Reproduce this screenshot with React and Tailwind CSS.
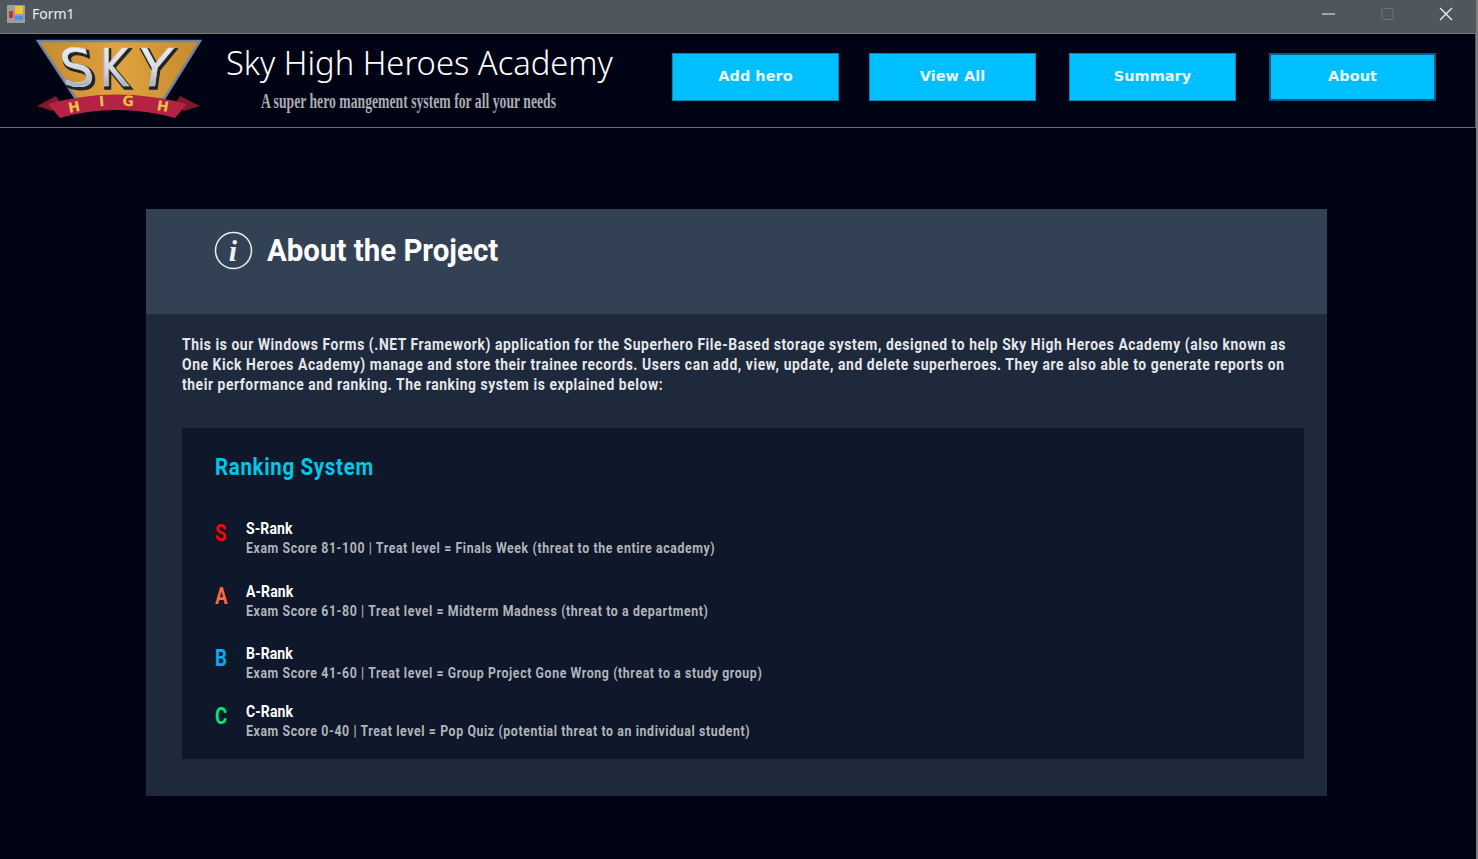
import React from 'react';

const ranks = [
    { letter: 'S', name: 'S-Rank', color: 'text-[#f00a0a]', detail: 'Exam Score 81-100 | Treat level = Finals Week (threat to the entire academy)', rowClass: 'h-[62.5px]' },
    { letter: 'A', name: 'A-Rank', color: 'text-[#fb6a3c]', detail: 'Exam Score 61-80 | Treat level = Midterm Madness (threat to a department)', rowClass: 'h-[62.5px]' },
    { letter: 'B', name: 'B-Rank', color: 'text-[#00aeef]', detail: 'Exam Score 41-60 | Treat level = Group Project Gone Wrong (threat to a study group)', rowClass: 'h-[58px]' },
    { letter: 'C', name: 'C-Rank', color: 'text-[#00e676]', detail: 'Exam Score 0-40 | Treat level = Pop Quiz (potential threat to an individual student)', rowClass: 'h-[48px]' },
];

const skyLetters = [
    { char: 'S', transform: 'translate(27 47) skewX(8) scale(1 1)' },
    { char: 'K', transform: 'translate(64 47) scale(0.82 1)' },
    { char: 'Y', transform: 'translate(100 47) skewX(-8) scale(1.02 1)' },
];

const highLetters = [
    { char: 'H', x: 39, y: 73, angle: -11 },
    { char: 'I', x: 66, y: 67, angle: -5 },
    { char: 'G', x: 92, y: 67, angle: 2 },
    { char: 'H', x: 126, y: 72, angle: 10 },
];

const Logo = () => (
    <svg width="166" height="84" viewBox="0 -4 166 84" className="-mt-[4px] shrink-0">
        <defs>
            <linearGradient id="chrome" x1="0" y1="0" x2="0" y2="1">
                <stop offset="0" stopColor="#f4f5f7" />
                <stop offset="0.55" stopColor="#d3d7dc" />
                <stop offset="1" stopColor="#8a909a" />
            </linearGradient>
            <linearGradient id="panel" x1="0" y1="0" x2="1" y2="0">
                <stop offset="0" stopColor="#c58a2e" />
                <stop offset="0.5" stopColor="#e0a23e" />
                <stop offset="1" stopColor="#c58a2e" />
            </linearGradient>
        </defs>
        <path d="M2 2 H164 L128 60 H40 Z" fill="url(#panel)" stroke="#6d85a0" strokeWidth="2.5" />
        {skyLetters.map((item) => (
            <g key={item.char} transform={item.transform}>
                <text x="1.5" y="1.5" fontFamily="DejaVu Sans" fontSize="52" fill="#23252c" stroke="#23252c" strokeWidth="3.5">{item.char}</text>
                <text fontFamily="DejaVu Sans" fontSize="52" fill="url(#chrome)" stroke="#d9dde2" strokeWidth="0.6">{item.char}</text>
            </g>
        ))}
        <path d="M1 67 L20 57 L26 66 L16 72 Z M164 67 L144 57 L138 66 L148 72 Z" fill="#7e1a2c" />
        <path d="M12 65 Q80 46 151 65 L139 79 Q80 63 24 79 Z" fill="#b52344" />
        {highLetters.map((item, i) => (
            <text key={i} x={item.x} y={item.y} textAnchor="middle" transform={`rotate(${item.angle} ${item.x} ${item.y})`} fontFamily="DejaVu Sans" fontWeight="700" fontSize="14" fill="#e8c14a">{item.char}</text>
        ))}
    </svg>
);

const NavButton = ({ label, active, className = '' }) => (
    <button className={`flex h-[48px] w-[167px] items-center justify-center bg-[#00bfff] font-['DejaVu_Sans'] text-[14.5px] font-bold text-[#e8f8ff] ${active ? 'border-2 border-[#035f80]' : 'border border-[#0687b4]'} ${className}`}>
        {label}
    </button>
);

export default function App() {
    return (
        <div className="flex h-[859px] w-[1478px] flex-col overflow-hidden border-r-2 border-[#7c7f82] bg-[#000314]">
            {/* Title bar */}
            <div className="flex h-[34px] shrink-0 items-center justify-between border-b border-[#77797c] bg-[#4f575d] pb-[6px] pl-[7px]">
                <div className="flex items-center gap-[7px]">
                    <svg width="18" height="18" viewBox="0 0 18 18">
                        <rect width="18" height="18" fill="#9a9ea2" />
                        <rect x="8" y="1" width="8" height="8" fill="#f2c230" />
                        <rect x="2" y="6" width="4" height="7" fill="#c8352b" />
                        <rect x="8" y="11" width="8" height="4" fill="#4a90e2" />
                    </svg>
                    <span className="font-['Noto_Sans'] text-[14px] text-[#eceeef]">Form1</span>
                </div>
                <div className="flex items-center">
                    <svg width="58" height="14" viewBox="0 0 58 14"><path d="M22 7 H35" stroke="#f4f4f4" strokeWidth="1" /></svg>
                    <svg width="58" height="14" viewBox="0 0 58 14"><rect x="24" y="1.5" width="11" height="11" rx="1.5" fill="none" stroke="#6f767b" /></svg>
                    <svg width="60" height="14" viewBox="0 0 60 14"><path d="M24 1 L36 13 M36 1 L24 13" stroke="#f4f4f4" strokeWidth="1.2" /></svg>
                </div>
            </div>

            {/* Header */}
            <header className="flex h-[94px] shrink-0 items-start border-r border-b border-r-[#55585c] border-b-[#6a6c70] pt-[5px] pl-[36px]">
                <Logo />
                <div className="ml-[24px] flex w-[445px] shrink-0 flex-col pt-[2px]">
                    <h1 className="font-['Noto_Sans'] text-[32.7px] leading-[44px] font-light whitespace-nowrap text-white">Sky High Heroes Academy</h1>
                    <p className="mt-[6px] ml-[35px] origin-left scale-x-[0.685] font-['Liberation_Serif'] text-[20px] leading-[20px] font-bold whitespace-nowrap text-[#a9adb3]">A super hero mangement system for all your needs</p>
                </div>
                <nav className="mt-[14px] ml-[1px] flex">
                    <NavButton label="Add hero" />
                    <NavButton label="View All" className="ml-[30px]" />
                    <NavButton label="Summary" className="ml-[33px]" />
                    <NavButton label="About" active className="ml-[33px]" />
                </nav>
            </header>

            {/* Content */}
            <main className="pt-[81px] pr-[149px] pl-[146px]">
                <section className="h-[587px] bg-[#1e293b]">
                    <div className="flex h-[105px] items-start gap-[14px] bg-[#334155] pt-[22px] pl-[68px]">
                        <svg width="39" height="39" viewBox="0 0 39 39" className="shrink-0">
                            <circle cx="19.5" cy="19.5" r="18" fill="none" stroke="#e9ecef" strokeWidth="1.5" />
                            <text x="19" y="30" textAnchor="middle" fontFamily="Liberation Serif" fontStyle="italic" fontWeight="700" fontSize="30" fill="#f1f3f5">i</text>
                        </svg>
                        <h2 className="origin-left scale-x-[0.92] font-['Roboto'] text-[32px] leading-[38px] font-bold whitespace-nowrap text-white">About the Project</h2>
                    </div>
                    <div className="pt-[21px] pr-[23px] pl-[36px]">
                        <p className="origin-left scale-x-[0.84] font-['Roboto'] text-[16.5px] leading-[20px] font-bold tracking-[0.69px] whitespace-nowrap text-[#e5e7eb]">
                            This is our Windows Forms (.NET Framework) application for the Superhero File-Based storage system, designed to help Sky High Heroes Academy (also known as<br />
                            One Kick Heroes Academy) manage and store their trainee records. Users can add, view, update, and delete superheroes. They are also able to generate reports on<br />
                            their performance and ranking. The ranking system is explained below:
                        </p>
                        <div className="mt-[33px] h-[331px] bg-[#0f172a] pt-[24px] pl-[33px]">
                            <h3 className="origin-left scale-x-[0.85] font-['Roboto'] text-[24px] leading-[30px] font-bold tracking-[0.84px] whitespace-nowrap text-[#00c8e8]">Ranking System</h3>
                            <div className="mt-[37px] flex flex-col">
                                {ranks.map((rank) => (
                                    <div key={rank.letter} className={`flex ${rank.rowClass}`}>
                                        <span className={`-mt-[1px] w-[31px] shrink-0 origin-left scale-x-[0.78] font-['Roboto'] text-[24px] leading-[30px] font-bold ${rank.color}`}>{rank.letter}</span>
                                        <div className="flex flex-col">
                                            <span className="origin-left scale-x-[0.85] font-['Roboto'] text-[16.5px] leading-[20px] font-bold tracking-[0.1px] whitespace-nowrap text-white">{rank.name}</span>
                                            <span className="origin-left scale-x-[0.85] font-['Roboto'] text-[14.5px] leading-[19px] font-bold tracking-[0.71px] whitespace-nowrap text-[#b0b5bb]">{rank.detail}</span>
                                        </div>
                                    </div>
                                ))}
                            </div>
                        </div>
                    </div>
                </section>
            </main>
        </div>
    );
}
